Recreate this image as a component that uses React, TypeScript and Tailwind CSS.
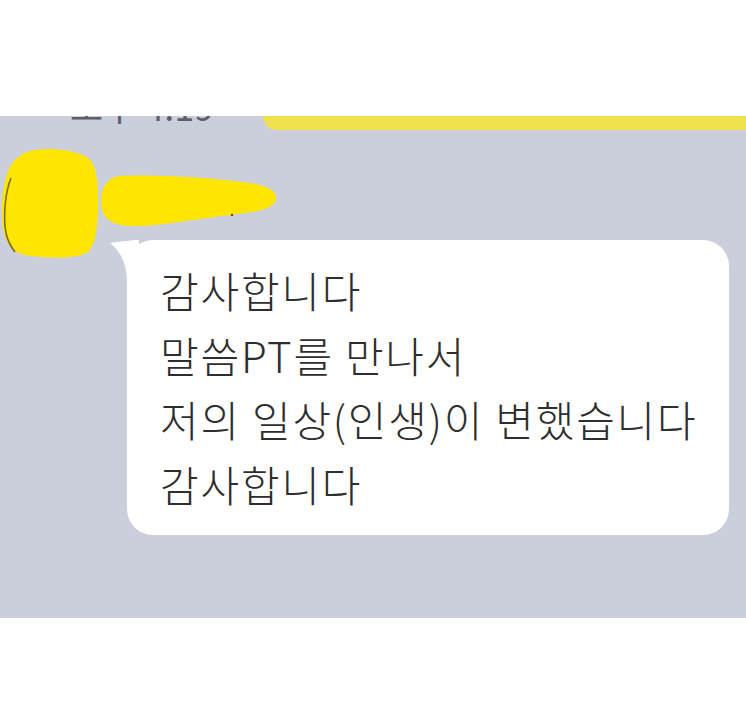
import React from "react";

const lines = ["감사합니다", "말씀PT를 만나서", "저의 일상(인생)이 변했습니다", "감사합니다"];

function ProfileScribble() {
  return (
    <svg width="100" height="115" viewBox="0 0 100 115" className="shrink-0">
      <path
        d="M30 3 C45 -1 70 1 85 8 C96 14 98 30 98 50 C98 75 97 95 88 104 C78 111 50 110 30 108 C12 106 3 94 2 70 C1 45 6 20 15 12 C20 7 25 4 30 3 Z"
        fill="#ffe500"
      />
      <path d="M11 30 C5 45 3 70 6 85 C8 95 12 100 15 104" fill="none" stroke="#4a3a18" strokeWidth="1.6" opacity="0.7" />
    </svg>
  );
}

function NameScribble() {
  return (
    <svg width="178" height="54" viewBox="0 0 178 54">
      <path
        d="M20 1 C50 -1 110 2 150 8 C170 11 177 17 176 24 C175 33 160 37 130 40 C100 43 60 52 30 51 C8 50 1 40 1 27 C1 12 8 2 20 1 Z"
        fill="#ffe500"
      />
      <circle cx="132" cy="40" r="1.2" fill="#5a4a20" />
    </svg>
  );
}

export default function App() {
  return (
    <div className="flex h-[716px] w-[746px] flex-col bg-white font-['Noto_Sans_CJK_KR','Noto_Sans',sans-serif]">
      <div className="h-[116px] shrink-0" />
      <div className="flex h-[502px] shrink-0 flex-col overflow-hidden bg-[#cacfdb]">
        <div className="flex h-[14px] shrink-0">
          <div className="w-[263px] shrink-0 overflow-hidden pl-[70px]">
            <span className="-mt-[29px] block whitespace-nowrap text-[36px] leading-[36px] text-[#5a5f6b]">오후 4:19</span>
          </div>
          <div className="flex-1 rounded-bl-[14px] bg-[#f0e24e]" />
        </div>

        <div className="mt-[18px] flex">
          <ProfileScribble />
          <div className="flex flex-col">
            <div className="mt-[27px]">
              <NameScribble />
            </div>
            <div className="relative ml-[27px] mt-[11px] h-[295px] w-[602px] rounded-[26px] bg-white px-[33px] pt-[18px]">
              <svg width="30" height="40" viewBox="0 0 30 40" className="absolute -left-[18px] top-0">
                <path d="M1 3 C10 2 22 0 30 0 L30 40 L18 40 C17 22 11 11 1 3 Z" fill="#ffffff" />
              </svg>
              {lines.map((t, i) => (
                <p key={i} className="relative whitespace-nowrap text-[42px] font-light leading-[64.5px] tracking-[1.8px] text-[#2e2e2e]">
                  {t}
                </p>
              ))}
            </div>
          </div>
        </div>
      </div>
      <div className="flex-1" />
    </div>
  );
}
